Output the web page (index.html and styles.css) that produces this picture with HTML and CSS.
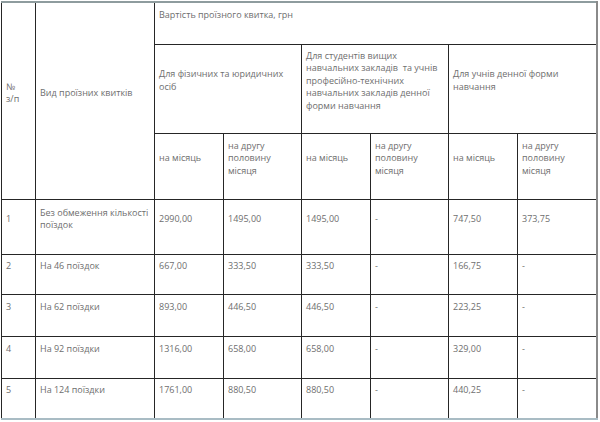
FILE: index.html
```html
<!DOCTYPE html>
<html lang="uk">
<head>
<meta charset="utf-8">
<link rel="stylesheet" href="styles.css">
</head>
<body>
<div class="wrap">
<table class="fares">
  <colgroup>
    <col class="c1"><col class="c2"><col class="c3"><col class="c4"><col class="c5"><col class="c6"><col class="c7"><col class="c8">
  </colgroup>
  <tbody>
    <tr class="h1">
      <td rowspan="3"><p>№<br>з/п</p></td>
      <td rowspan="3"><p>Вид проїзних квитків</p></td>
      <td colspan="6"><p>Вартість проїзного квитка, грн</p></td>
    </tr>
    <tr class="h2">
      <td colspan="2"><p>Для фізичних та юридичних осіб</p></td>
      <td colspan="2"><p>Для студентів вищих навчальних закладів&nbsp; та учнів професійно-технічних навчальних закладів денної форми навчання</p></td>
      <td colspan="2"><p>Для учнів денної форми навчання</p></td>
    </tr>
    <tr class="h3">
      <td><p>на місяць</p></td>
      <td><p>на другу половину місяця</p></td>
      <td><p>на місяць</p></td>
      <td><p>на другу половину місяця</p></td>
      <td><p>на місяць</p></td>
      <td><p>на другу половину місяця</p></td>
    </tr>
    <tr class="r1">
      <td><p>1</p></td>
      <td><p>Без обмеження кількості поїздок</p></td>
      <td><p>2990,00</p></td>
      <td><p>1495,00</p></td>
      <td><p>1495,00</p></td>
      <td><p>-</p></td>
      <td><p>747,50</p></td>
      <td><p>373,75</p></td>
    </tr>
    <tr class="r2">
      <td><p>2</p></td>
      <td><p>На 46 поїздок</p></td>
      <td><p>667,00</p></td>
      <td><p>333,50</p></td>
      <td><p>333,50</p></td>
      <td><p>-</p></td>
      <td><p>166,75</p></td>
      <td><p>-</p></td>
    </tr>
    <tr class="r3">
      <td><p>3</p></td>
      <td><p>На 62 поїздки</p></td>
      <td><p>893,00</p></td>
      <td><p>446,50</p></td>
      <td><p>446,50</p></td>
      <td><p>-</p></td>
      <td><p>223,25</p></td>
      <td><p>-</p></td>
    </tr>
    <tr class="r4">
      <td><p>4</p></td>
      <td><p>На 92 поїздки</p></td>
      <td><p>1316,00</p></td>
      <td><p>658,00</p></td>
      <td><p>658,00</p></td>
      <td><p>-</p></td>
      <td><p>329,00</p></td>
      <td><p>-</p></td>
    </tr>
    <tr class="r5">
      <td><p>5</p></td>
      <td><p>На 124 поїздки</p></td>
      <td><p>1761,00</p></td>
      <td><p>880,50</p></td>
      <td><p>880,50</p></td>
      <td><p>-</p></td>
      <td><p>440,25</p></td>
      <td><p>-</p></td>
    </tr>
  </tbody>
</table>
</div>
</body>
</html>
```
FILE: styles.css
```css
html, body {
  margin: 0;
  padding: 0;
  background: #ffffff;
}
.wrap {
  padding: 1px 0 0 1px;
}
.fares {
  border-collapse: collapse;
  table-layout: fixed;
  width: 596px;
  font-family: "Open Sans", "Liberation Sans", sans-serif;
  font-size: 9px;
  line-height: 12.5px;
  color: #6e6e6e;
  border-top: 2px solid #8e9c9e;
  border-bottom: 2px solid #a9bcc4;
  border-right: 2px solid #8a8a8a;
}
.c1 { width: 34px; }
.c2 { width: 119px; }
.c3 { width: 69px; }
.c4 { width: 78px; }
.c5 { width: 69px; }
.c6 { width: 78px; }
.c7 { width: 69px; }
.c8 { width: 79px; }
.fares td {
  border: 1px solid #262626;
  padding: 5px 4px 5px 4px;
  vertical-align: middle;
  text-align: left;
}
.fares tr:first-child td { border-top: none; }
.fares tr:last-child td { border-bottom: none; }
.fares p {
  margin: 0 0 16px 0;
}
.h1 { height: 42px; }
.h2 { height: 88px; }
.h3 { height: 66px; }
.r1 { height: 55px; }
.r2 { height: 40px; }
.r3 { height: 42px; }
.r4 { height: 42px; }
.r5 { height: 40px; }
```
